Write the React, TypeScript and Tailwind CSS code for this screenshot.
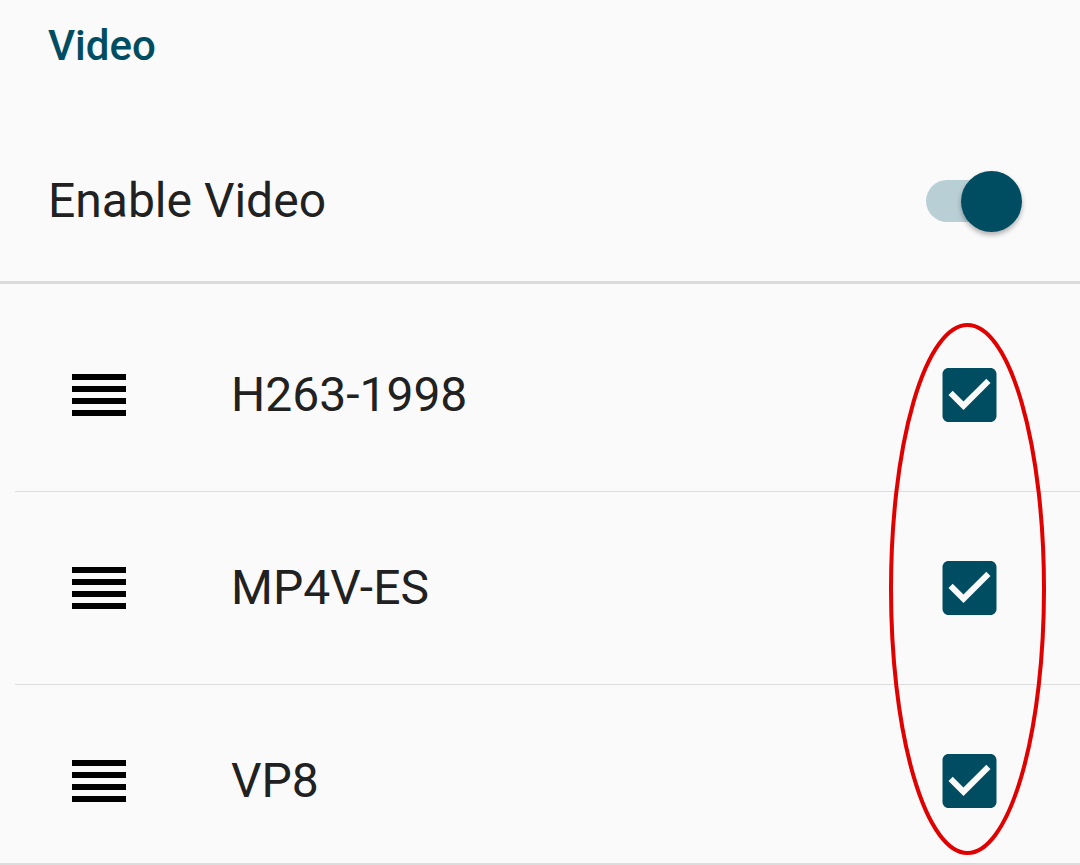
import React from "react";

const codecs = ["H263-1998", "MP4V-ES", "VP8"];

function ReorderIcon() {
  return (
    <svg width="54" height="42" viewBox="3 5 18 14" className="shrink-0" shapeRendering="crispEdges">
      <path d="M3 15h18v-2H3v2zm0 4h18v-2H3v2zm0-8h18V9H3v2zm0-6v2h18V5H3z" fill="#000" />
    </svg>
  );
}

function CheckBox() {
  return (
    <svg width="55" height="54" viewBox="3 3 18 18" className="shrink-0">
      <path
        d="M19 3H5c-1.11 0-2 .9-2 2v14c0 1.1.89 2 2 2h14c1.11 0 2-.9 2-2V5c0-1.1-.89-2-2-2zm-9 14l-5-5 1.41-1.41L10 14.17l7.59-7.59L19 8l-9 9z"
        fill="#004d61"
      />
    </svg>
  );
}

function Toggle() {
  return (
    <div className="relative w-[96px] h-[61px] shrink-0">
      <div className="absolute left-0 top-[9px] h-[42px] w-[84px] rounded-full bg-[#b9cfd6]" />
      <div className="absolute right-0 top-0 h-[61px] w-[61px] rounded-full bg-[#004d61] shadow-[0_3px_5px_rgba(0,0,0,0.3)]" />
    </div>
  );
}

export default function App() {
  return (
    <div className="relative h-[865px] w-[1080px] overflow-hidden border-b-2 border-[#dcdcdc] bg-[#fafafa] font-['Roboto',sans-serif] text-[#212121]">
      <div className="h-[121px] pl-[48px] pt-[25px]">
        <div className="text-[42px] leading-[42px] font-medium text-[#004d61]">Video</div>
      </div>

      <div className="flex h-[163px] items-center justify-between pl-[48px] pr-[58px] border-b-[3px] border-[#dadada]">
        <span className="text-[48px] leading-none">Enable Video</span>
        <Toggle />
      </div>

      <div className="pt-[15px]">
        {codecs.map((c) => (
          <div key={c} className="ml-[15px] flex h-[193px] items-center border-b border-[#dddddd] pl-[57px] pr-[83px]">
            <ReorderIcon />
            <span className="ml-[105px] flex-1 text-[48px] leading-none">{c}</span>
            <CheckBox />
          </div>
        ))}
      </div>

      <svg className="absolute left-0 top-0 pointer-events-none" width="1080" height="865">
        <ellipse cx="967.5" cy="589" rx="76.5" ry="264" fill="none" stroke="#e00000" strokeWidth="4" />
      </svg>
    </div>
  );
}
